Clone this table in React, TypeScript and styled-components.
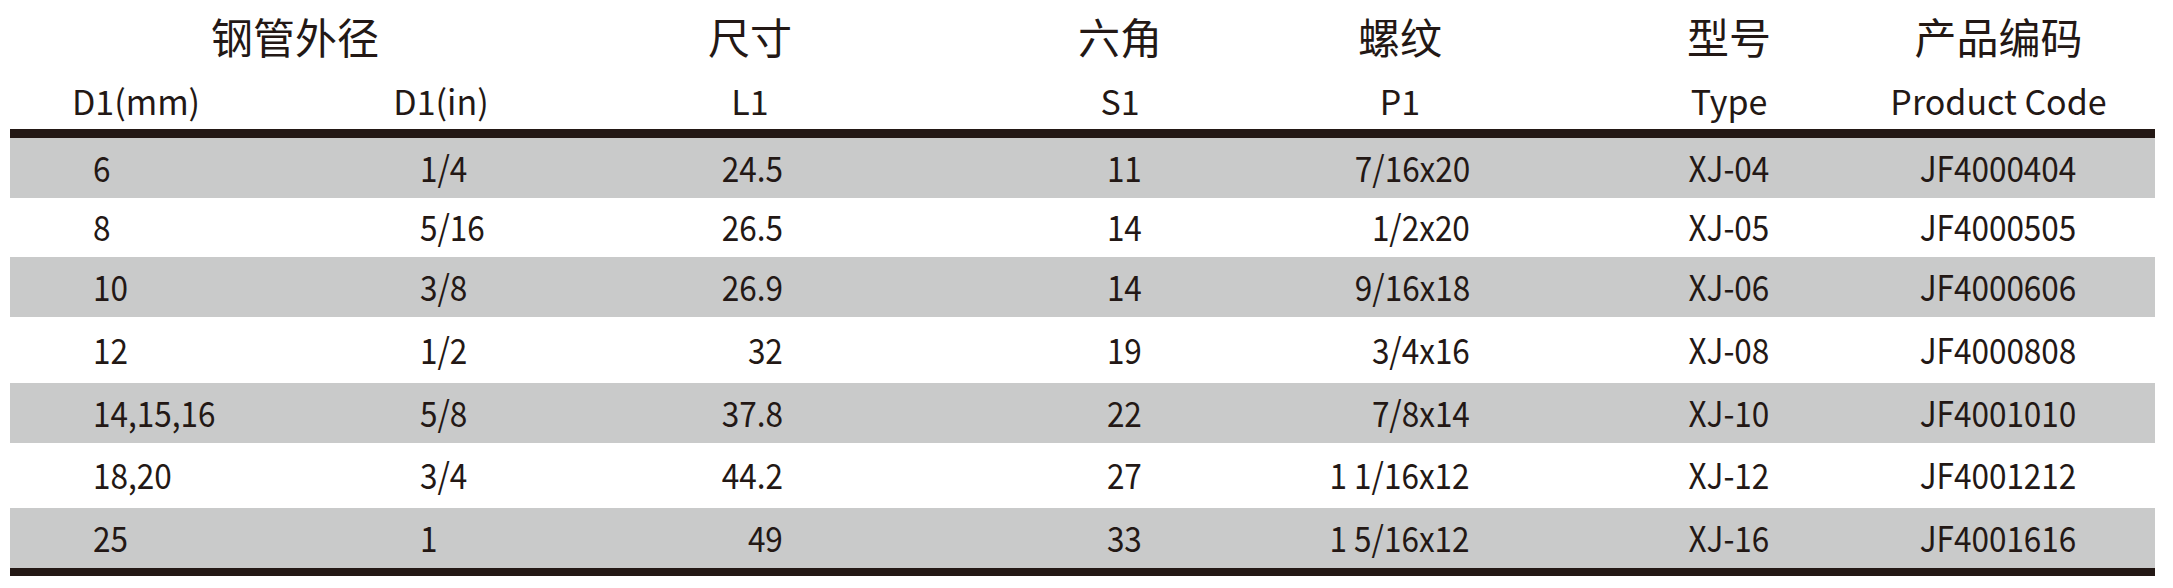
import React from 'react';
import styled, { createGlobalStyle } from 'styled-components';

const INK = '#231815';
const STRIPE = '#c9caca';

const GlobalStyle = createGlobalStyle`
  html, body {
    margin: 0;
    padding: 0;
    background: #ffffff;
  }
  body {
    font-family: 'Noto Sans CJK SC', 'Noto Sans', sans-serif;
    color: ${INK};
  }
`;

type Align = 'left' | 'right' | 'center';

interface Column {
  width: number;
  align: Align;
  pad: number;
  shift: number;
}

// x positions measured from the sheet: header text is centred on its column (plus shift),
// data text sits left / right / centre with a padding
const COLUMNS: Column[] = [
  { width: 252, align: 'left', pad: 83, shift: 0 },
  { width: 358, align: 'left', pad: 158, shift: 0 },
  { width: 260, align: 'right', pad: 97, shift: 0 },
  { width: 360, align: 'right', pad: 98, shift: 60 },
  { width: 320, align: 'right', pad: 90, shift: 0 },
  { width: 338, align: 'center', pad: 0, shift: 0 },
  { width: 257, align: 'center', pad: 0, shift: -28 },
];

const TEMPLATE = COLUMNS.map((c) => `${c.width}px`).join(' ');

const JUSTIFY: Record<Align, string> = {
  left: 'flex-start',
  right: 'flex-end',
  center: 'center',
};

const GROUPS = [
  { label: '钢管外径', span: 2, shift: -20 },
  { label: '尺寸', span: 1, shift: 0 },
  { label: '六角', span: 1, shift: 60 },
  { label: '螺纹', span: 1, shift: 0 },
  { label: '型号', span: 1, shift: 0 },
  { label: '产品编码', span: 1, shift: -28 },
];

const SUBHEADS = ['D1(mm)', 'D1(in)', 'L1', 'S1', 'P1', 'Type', 'Product Code'];

const ROWS = [
  { h: 60, cells: ['6', '1/4', '24.5', '11', '7/16x20', 'XJ-04', 'JF4000404'] },
  { h: 59, cells: ['8', '5/16', '26.5', '14', '1/2x20', 'XJ-05', 'JF4000505'] },
  { h: 60, cells: ['10', '3/8', '26.9', '14', '9/16x18', 'XJ-06', 'JF4000606'] },
  { h: 66, cells: ['12', '1/2', '32', '19', '3/4x16', 'XJ-08', 'JF4000808'] },
  { h: 60, cells: ['14,15,16', '5/8', '37.8', '22', '7/8x14', 'XJ-10', 'JF4001010'] },
  { h: 65, cells: ['18,20', '3/4', '44.2', '27', '1 1/16x12', 'XJ-12', 'JF4001212'] },
  { h: 60, cells: ['25', '1', '49', '33', '1 5/16x12', 'XJ-16', 'JF4001616'] },
];

const Sheet = styled.div`
  width: 2145px;
  padding-left: 10px;
`;

const GroupRow = styled.div`
  display: grid;
  grid-template-columns: ${TEMPLATE};
  height: 72px;
  align-items: center;
`;

const HeadCell = styled.div<{ $span?: number; $shift: number; $size: number }>`
  grid-column: span ${(p) => p.$span ?? 1};
  display: flex;
  justify-content: center;
  font-size: ${(p) => p.$size}px;
  line-height: 1;
  white-space: nowrap;
  padding-left: ${(p) => Math.max(0, p.$shift * 2)}px;
  padding-right: ${(p) => Math.max(0, -p.$shift * 2)}px;
`;

const SubRow = styled.div`
  display: grid;
  grid-template-columns: ${TEMPLATE};
  height: 57px;
  align-items: center;
`;

const Rule = styled.div<{ $h: number }>`
  height: ${(p) => p.$h}px;
  background: ${INK};
`;

const DataRow = styled.div<{ $striped: boolean; $h: number }>`
  display: grid;
  grid-template-columns: ${TEMPLATE};
  height: ${(p) => p.$h}px;
  align-items: center;
  padding-bottom: 4px;
  box-sizing: border-box;
  background: ${(p) => (p.$striped ? STRIPE : '#ffffff')};
`;

const DataCell = styled.div<{ $align: Align; $pad: number; $shift: number }>`
  display: flex;
  justify-content: ${(p) => JUSTIFY[p.$align]};
  font-size: 35px;
  line-height: 1;
  white-space: nowrap;
  padding-left: ${(p) =>
    p.$align === 'left' ? p.$pad : Math.max(0, p.$shift * 2)}px;
  padding-right: ${(p) =>
    p.$align === 'right' ? p.$pad : Math.max(0, -p.$shift * 2)}px;
`;

// the figures in the sheet are set in a slightly condensed cut
const Figure = styled.span<{ $align: Align }>`
  display: inline-block;
  transform: scaleX(0.9);
  transform-origin: ${(p) => p.$align} center;
`;

const App: React.FC = () => (
  <>
    <GlobalStyle />
    <Sheet>
      <GroupRow>
        {GROUPS.map((g) => (
          <HeadCell key={g.label} $span={g.span} $shift={g.shift} $size={42}>
            {g.label}
          </HeadCell>
        ))}
      </GroupRow>
      <SubRow>
        {SUBHEADS.map((s, i) => (
          <HeadCell key={s} $shift={COLUMNS[i].shift} $size={34}>
            {s}
          </HeadCell>
        ))}
      </SubRow>
      <Rule $h={9} />
      {ROWS.map((row, r) => (
        <DataRow key={row.cells[6]} $striped={r % 2 === 0} $h={row.h}>
          {row.cells.map((v, i) => (
            <DataCell
              key={i}
              $align={COLUMNS[i].align}
              $pad={COLUMNS[i].pad}
              $shift={COLUMNS[i].shift}
            >
              <Figure $align={COLUMNS[i].align}>{v}</Figure>
            </DataCell>
          ))}
        </DataRow>
      ))}
      <Rule $h={8} />
    </Sheet>
  </>
);

export default App;
